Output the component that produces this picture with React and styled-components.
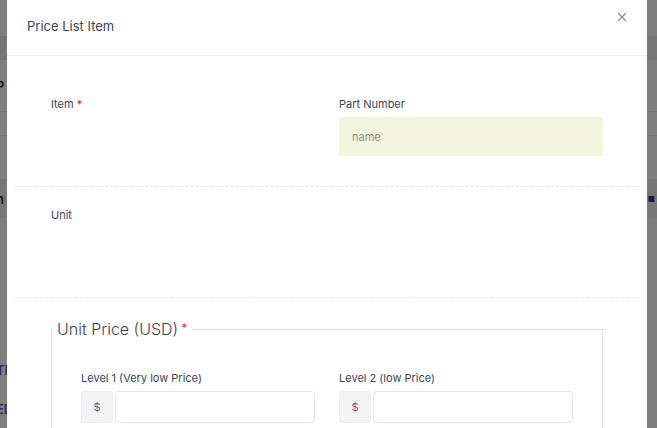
import React from 'react';
import styled, { createGlobalStyle } from 'styled-components';

const GlobalStyle = createGlobalStyle`
    html, body {
        margin: 0;
        padding: 0;
        width: 657px;
        height: 428px;
        overflow: hidden;
        font-family: Inter, "Open Sans", sans-serif;
    }
`;

const Page = styled.div`
    width: 657px;
    height: 428px;
    background: #fff;
    display: flex;
    flex-direction: column;
`;

const PageBand = styled.div`
    height: ${props => props.h}px;
    background: ${props => props.bg || '#fff'};
    border-bottom: ${props => props.line ? '1px solid #e6e6e6' : 'none'};
    color: ${props => props.color || '#333'};
    font-size: 13px;
    font-weight: 600;
    display: flex;
    align-items: center;
    justify-content: space-between;
    padding: 0 2px 0 0;
    box-sizing: border-box;
    margin-left: -4px;
`;

const Overlay = styled.div`
    position: fixed;
    inset: 0;
    background-color: rgba(0, 0, 0, 0.5);
`;

const Dialog = styled.div`
    position: fixed;
    top: 0;
    left: 7px;
    width: 640px;
    height: 460px;
    background: #fff;
    border-radius: 0 0 4px 4px;
`;

const Header = styled.div`
    height: 56px;
    box-sizing: border-box;
    border-bottom: 1px solid #ebedf3;
    display: flex;
    align-items: center;
    justify-content: space-between;
    padding: 0 20px 0 20px;
`;

const Title = styled.h3`
    margin: 0 0 3px 0;
    font-size: 13px;
    font-weight: 400;
    color: #3f4254;
`;

const Close = styled.button`
    border: none;
    background: none;
    padding: 0;
    margin-top: -22px;
    width: 10px;
    height: 10px;
    display: flex;
    cursor: pointer;
`;

const Body = styled.div`
    padding: 0 8px;
`;

const Row = styled.div`
    display: grid;
    grid-template-columns: 264px 264px;
    column-gap: 24px;
    padding: ${props => props.pad || '41px 0 29px 36px'};
    height: ${props => props.h}px;
    box-sizing: border-box;
    border-bottom: ${props => props.dashed ? '1px dashed #e4e6ef' : 'none'};
`;

const Field = styled.div`
    display: flex;
    flex-direction: column;
`;

const Label = styled.label`
    font-size: 11px;
    color: #3f4254;
    height: 20px;
    line-height: 14px;
`;

const Req = styled.span`
    color: #f00;
    margin-left: 3px;
    font-size: ${props => props.small ? '12px' : 'inherit'};
    vertical-align: ${props => props.small ? '3px' : 'baseline'};
`;

const Input = styled.input`
    height: 39px;
    box-sizing: border-box;
    border: none;
    border-radius: 0;
    background: #f3f6dc;
    padding: 0 13px;
    font-family: inherit;
    font-size: 11px;
    color: #3f4254;
    outline: none;
    &::placeholder {
        color: #8a8d92;
    }
`;

const Fieldset = styled.fieldset`
    margin: 21px 36px 0 36px;
    width: 552px;
    box-sizing: border-box;
    border: 1px solid #dcdde0;
    padding: 32px 29px 20px 29px;
    display: grid;
    grid-template-columns: 234px 234px;
    column-gap: 24px;
`;

const Legend = styled.legend`
    font-size: 16px;
    font-weight: 300;
    color: #3f4254;
    padding: 0 5px 0 5px;
    margin-left: -29px;
`;

const Group = styled.div`
    display: flex;
    gap: 2px;
    height: 32px;
`;

const Addon = styled.span`
    width: 32px;
    box-sizing: border-box;
    background: #f3f3f7;
    border: 1px solid #ebedf3;
    border-radius: 3px;
    display: flex;
    align-items: center;
    justify-content: center;
    font-size: 11px;
    color: #5e6278;
`;

const PriceInput = styled.input`
    flex: 1;
    min-width: 0;
    box-sizing: border-box;
    border: 1px solid #e4e6ef;
    border-radius: 4px;
    outline: none;
    background: #fff;
`;

const levels = ['Level 1 (Very low Price)', 'Level 2 (low Price)'];

const App = () => {
    return (
        <>
            <GlobalStyle />
            <Page>
                <PageBand h={36} />
                <PageBand h={24} bg="#eaeaea" />
                <PageBand h={52} line color="#1f2a44">
                    <span>P</span>
                </PageBand>
                <PageBand h={24} line />
                <PageBand h={43} />
                <PageBand h={39} bg="#f0f0f3">
                    <span>n</span>
                    <span style={{ color: '#2a3d8f', fontSize: 8 }}>■</span>
                </PageBand>
                <PageBand h={132} />
                <PageBand h={40} color="#5b5fc7">
                    <span>TIN</span>
                </PageBand>
                <PageBand h={38} color="#5b5fc7">
                    <span>ED</span>
                </PageBand>
            </Page>
            <Overlay />
            <Dialog>
                <Header>
                    <Title>Price List Item</Title>
                    <Close aria-label="close">
                        <svg width="10" height="10" viewBox="0 0 10 10">
                            <path d="M1 1L9 9M9 1L1 9" stroke="#8a8a8a" strokeWidth="1.1" fill="none" />
                        </svg>
                    </Close>
                </Header>
                <Body>
                    <Row dashed h={131}>
                        <Field>
                            <Label>Item<Req>*</Req></Label>
                        </Field>
                        <Field>
                            <Label>Part Number</Label>
                            <Input placeholder="name" />
                        </Field>
                    </Row>
                    <Row dashed h={111} pad="21px 0 0 36px">
                        <Field>
                            <Label>Unit</Label>
                        </Field>
                    </Row>
                    <Fieldset>
                        <Legend>Unit Price (USD)<Req small>*</Req></Legend>
                        {levels.map(level => (
                            <Field key={level}>
                                <Label>{level}</Label>
                                <Group>
                                    <Addon>$</Addon>
                                    <PriceInput />
                                </Group>
                            </Field>
                        ))}
                    </Fieldset>
                </Body>
            </Dialog>
        </>
    );
};

export default App;
